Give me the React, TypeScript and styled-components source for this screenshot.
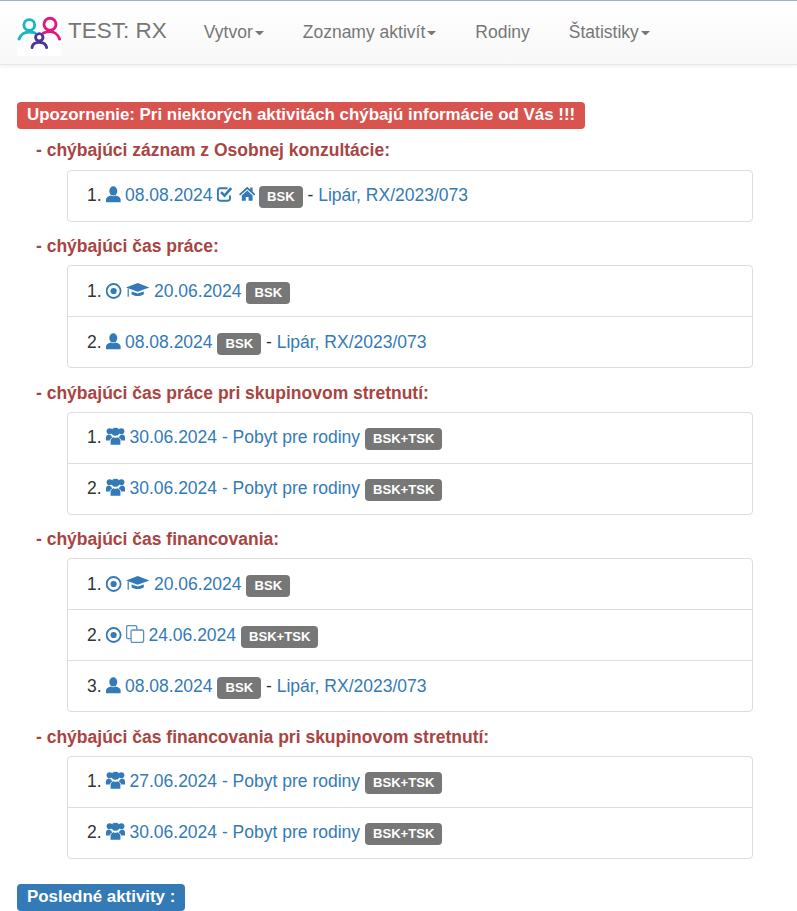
import React from 'react'
import styled, { createGlobalStyle } from 'styled-components'

const GlobalStyle = createGlobalStyle`
    body {
        margin: 0;
        background: #fff;
        font-family: "Liberation Sans", Arial, sans-serif;
        font-size: 17.5px;
        line-height: 30px;
        color: #333;
    }
`

const Navbar = styled.nav`
    display: flex;
    align-items: center;
    box-sizing: border-box;
    height: 65px;
    padding: 0 0 1px 17px;
    border-top: 1px solid #a3b3cf;
    border-bottom: 1px solid #e7e7e7;
    background: linear-gradient(to bottom, #fff 0%, #f8f8f8 100%);
    box-shadow: 0 1px 5px rgba(0, 0, 0, 0.075);
`

const Brand = styled.a`
    display: flex;
    align-items: center;
    gap: 7px;
    margin-right: 37px;
    font-size: 22.5px;
    color: #777;
`

const BrandName = styled.span`
    margin-bottom: 2px;
`

const LogoBox = styled.svg`
    display: block;
    width: 44px;
    height: 44px;
    margin-top: 3px;
    background: #fff;
`

const NavItems = styled.ul`
    display: flex;
    gap: 39px;
    margin: 0;
    padding: 0;
    list-style: none;
`

const NavItem = styled.li`
    display: flex;
    align-items: center;
    color: #777;
`

const Caret = styled.span`
    box-sizing: content-box;
    width: 0;
    height: 0;
    margin: 2px 0 0 2px;
    padding: 0 0.5px;
    border-top: 4px solid #777;
    border-left: 4px solid transparent;
    border-right: 4px solid transparent;
`

const Content = styled.main`
    padding: 37px 44px 0 17px;
`

const Banner = styled.div<{ $tone: 'danger' | 'primary' }>`
    display: table;
    height: 27px;
    padding: 0 10px;
    border-radius: 4px;
    background: ${(p) => (p.$tone === 'danger' ? '#d9534f' : '#337ab7')};
    color: #fff;
    font-size: 16.9px;
    font-weight: bold;
    line-height: 25px;
`

const Missing = styled.section`
    margin-top: 9.75px;
    margin-bottom: 25.25px;
`

const MissingTitle = styled.h4`
    margin: 0 0 8px 19px;
    font-size: 17.5px;
    font-weight: bold;
    line-height: 22px;
    color: #a94442;

    &:first-child {
        margin-bottom: 9px;
    }
`

const ListGroup = styled.ol`
    margin: 0 0 13.5px 50px;
    padding: 0;
    list-style: none;
    border: 1px solid #ddd;
    border-radius: 4px;
`

const ListItem = styled.li`
    height: 50px;
    padding: 9.5px 0 0 19px;
    box-sizing: border-box;
    white-space: nowrap;

    & + & {
        height: 51px;
        border-top: 1px solid #ddd;
    }
`

const Link = styled.a`
    color: #337ab7;
`

const Glyph = styled.svg`
    display: inline-block;
    vertical-align: -2px;
    fill: #337ab7;
`

const Badge = styled.span`
    display: inline-block;
    height: 22px;
    padding: 0 8px;
    border-radius: 4px;
    background: #777;
    color: #fff;
    font-size: 13.1px;
    font-weight: bold;
    line-height: 22px;
`

type IconName = 'user' | 'group' | 'check' | 'home' | 'record' | 'education' | 'copy'

// width of the cell each glyph takes up in the row, gap on the right included
const iconWidth: Record<IconName, number> = {
    user: 18.5,
    group: 23,
    check: 21.5,
    home: 20,
    record: 19.5,
    education: 28,
    copy: 22.5,
}

function Icon({ name }: { name: IconName }): React.ReactElement {
    const w = iconWidth[name]
    return (
        <Glyph width={w} height={18} viewBox={`0 0 ${w} 18`}>
            {name === 'user' && (
                <>
                    <ellipse cx="7.3" cy="5.9" rx="4" ry="4.6" />
                    <path d="M0 17.2 V14.6 C0 12.4 2.4 11.3 5 10.6 C6.4 11.6 8.2 11.6 9.6 10.6 C12.2 11.3 14.6 12.4 14.6 14.6 V17.2 Z" />
                </>
            )}
            {name === 'group' && (
                <>
                    <circle cx="3.6" cy="4.2" r="3" />
                    <circle cx="15.4" cy="4.2" r="3" />
                    <circle cx="9.5" cy="4.8" r="4" />
                    <path d="M0 13.6 V10.2 C0 8.4 1.4 7.8 3 7.4 C3.8 8 4.4 8.2 5 8.2 C5.4 9.4 6 10 6.4 10.4 C5 11 4 12 3.8 13.6 Z" />
                    <path d="M19 13.6 V10.2 C19 8.4 17.6 7.8 16 7.4 C15.2 8 14.6 8.2 14 8.2 C13.6 9.4 13 10 12.6 10.4 C14 11 15 12 15.2 13.6 Z" />
                    <path d="M4.6 17.8 V13.6 C4.6 11.8 6.2 10.8 7.6 10.2 C8.8 11 10.2 11 11.4 10.2 C12.8 10.8 14.4 11.8 14.4 13.6 V17.8 Z" />
                </>
            )}
            {name === 'check' && (
                <>
                    <path
                        d="M13 10.5 V13.6 Q13 15.7 10.9 15.7 H3 Q0.9 15.7 0.9 13.6 V5.4 Q0.9 3.3 3 3.3 H10.5"
                        fill="none"
                        stroke="#337ab7"
                        strokeWidth="1.9"
                    />
                    <path d="M3.2 8 L5 6.2 L7.5 8.8 L13.2 2.2 L15.2 4 L7.6 12.6 Z" />
                </>
            )}
            {name === 'home' && (
                <>
                    <path d="M0 9.2 L8.2 1.8 L11.2 4.4 V2.6 H13.6 V6.6 L16.4 9.2 L15.2 10.4 L8.2 4.2 L1.2 10.4 Z" />
                    <path d="M2.8 10.4 L8.2 5.6 L13.6 10.4 V15.8 H9.6 V12 H6.8 V15.8 H2.8 Z" />
                </>
            )}
            {name === 'record' && (
                <>
                    <circle cx="7.6" cy="10" r="7" fill="none" stroke="#337ab7" strokeWidth="1.8" />
                    <circle cx="7.6" cy="10" r="3.1" />
                </>
            )}
            {name === 'education' && (
                <>
                    <path d="M11.7 2 L23.4 6.4 L11.7 10.8 L0 6.4 Z" />
                    <path d="M5.6 10.4 L11.7 12.6 L17.8 10.4 V13.2 C15.6 15.6 7.8 15.6 5.6 13.2 Z" />
                    <path d="M1.6 7.4 H2.8 V15.8 H1.6 Z" />
                </>
            )}
            {name === 'copy' && (
                <g fill="none" stroke="#5a8fc2" strokeWidth="1.3">
                    <path d="M4.6 13.6 H2 Q0.6 13.6 0.6 12.2 V2 Q0.6 0.6 2 0.6 H9.4 Q10.8 0.6 10.8 2 V4.4" />
                    <rect x="5" y="5" width="12.6" height="12.4" rx="1.6" />
                </g>
            )}
        </Glyph>
    )
}

function FamilyLogo(): React.ReactElement {
    return (
        <LogoBox viewBox="0 0 44 44">
            <g fill="none" strokeWidth="2.9" strokeLinecap="round">
                <g stroke="#19b5c4">
                    <circle cx="12.3" cy="13" r="5.4" />
                    <path d="M2 27 C3.5 22.5 8 20 12.3 20 C14.6 20 16.5 20.4 18 21" />
                </g>
                <g stroke="#e0187f">
                    <circle cx="33" cy="12.3" r="6" />
                    <path d="M26.5 21 C28 20 30.5 19.6 33 19.6 C37 19.6 41 22.4 42.5 27" />
                </g>
                <g stroke="#4b3596">
                    <circle cx="22.3" cy="25.3" r="3.7" />
                    <path d="M15 35.5 C15.5 32 18.5 30.4 22.3 30.4 C26 30.4 29 32 29.6 35.5" />
                </g>
            </g>
        </LogoBox>
    )
}

type Row = {
    icons: IconName[]
    date: string
    tag: string
    contact?: boolean
    family?: string
}

const lipar = 'Lipár, RX/2023/073'
const stay = 'Pobyt pre rodiny'

const sections: { title: string; rows: Row[] }[] = [
    {
        title: '- chýbajúci záznam z Osobnej konzultácie:',
        rows: [{ icons: ['user'], date: '08.08.2024', contact: true, tag: 'BSK', family: lipar }],
    },
    {
        title: '- chýbajúci čas práce:',
        rows: [
            { icons: ['record', 'education'], date: '20.06.2024', tag: 'BSK' },
            { icons: ['user'], date: '08.08.2024', tag: 'BSK', family: lipar },
        ],
    },
    {
        title: '- chýbajúci čas práce pri skupinovom stretnutí:',
        rows: [
            { icons: ['group'], date: `30.06.2024 - ${stay}`, tag: 'BSK+TSK' },
            { icons: ['group'], date: `30.06.2024 - ${stay}`, tag: 'BSK+TSK' },
        ],
    },
    {
        title: '- chýbajúci čas financovania:',
        rows: [
            { icons: ['record', 'education'], date: '20.06.2024', tag: 'BSK' },
            { icons: ['record', 'copy'], date: '24.06.2024', tag: 'BSK+TSK' },
            { icons: ['user'], date: '08.08.2024', tag: 'BSK', family: lipar },
        ],
    },
    {
        title: '- chýbajúci čas financovania pri skupinovom stretnutí:',
        rows: [
            { icons: ['group'], date: `27.06.2024 - ${stay}`, tag: 'BSK+TSK' },
            { icons: ['group'], date: `30.06.2024 - ${stay}`, tag: 'BSK+TSK' },
        ],
    },
]

export default function App(): React.ReactElement {
    return (
        <>
            <GlobalStyle />
            <Navbar>
                <Brand>
                    <FamilyLogo />
                    <BrandName>TEST: RX</BrandName>
                </Brand>
                <NavItems>
                    <NavItem>Vytvor<Caret /></NavItem>
                    <NavItem>Zoznamy aktivít<Caret /></NavItem>
                    <NavItem>Rodiny</NavItem>
                    <NavItem>Štatistiky<Caret /></NavItem>
                </NavItems>
            </Navbar>
            <Content>
                <Banner $tone="danger">Upozornenie: Pri niektorých aktivitách chýbajú informácie od Vás !!!</Banner>
                <Missing>
                    {sections.map((section) => (
                        <React.Fragment key={section.title}>
                            <MissingTitle>{section.title}</MissingTitle>
                            <ListGroup>
                                {section.rows.map((row, i) => (
                                    <ListItem key={i}>
                                        {i + 1}.{' '}
                                        {row.icons.map((name) => <Icon key={name} name={name} />)}
                                        <Link>{row.date}</Link>{' '}
                                        {row.contact && <><Icon name="check" /><Icon name="home" /></>}
                                        <Badge>{row.tag}</Badge>
                                        {row.family && <> - <Link>{row.family}</Link></>}
                                    </ListItem>
                                ))}
                            </ListGroup>
                        </React.Fragment>
                    ))}
                </Missing>
                <Banner $tone="primary">Posledné aktivity :</Banner>
            </Content>
        </>
    )
}
